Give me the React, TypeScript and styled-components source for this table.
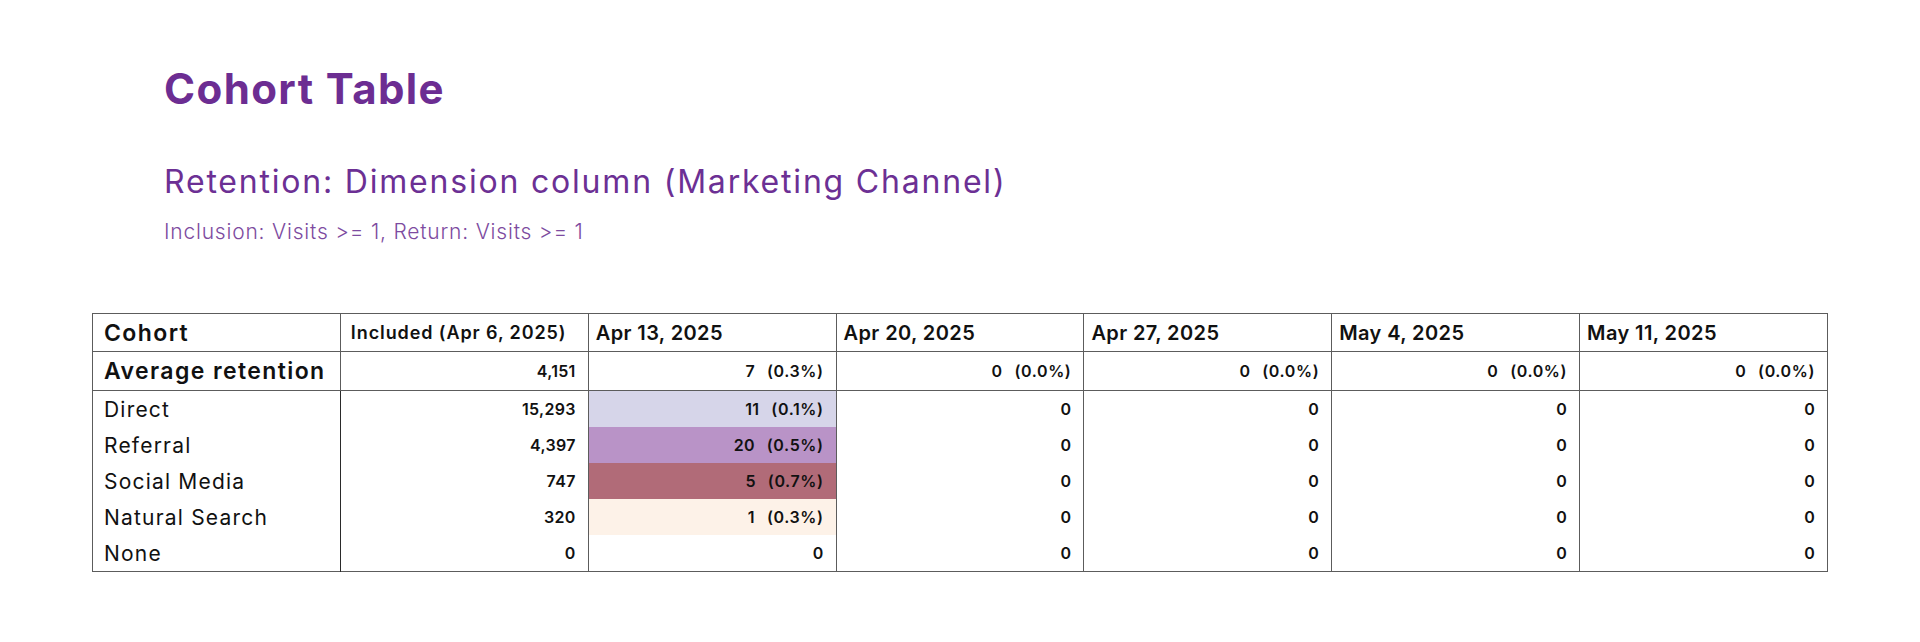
import React from "react";
import styled, { createGlobalStyle } from "styled-components";

const GlobalStyle = createGlobalStyle`
  html, body {
    margin: 0;
    padding: 0;
    background: #ffffff;
  }
  body {
    font-family: Inter, "Open Sans", "Liberation Sans", sans-serif;
    color: #111111;
  }
`;

const Page = styled.div`
  width: 1920px;
  height: 642px;
  box-sizing: border-box;
  padding: 64px 92px 0 92px;
  display: flex;
  flex-direction: column;
`;

const Heading = styled.header`
  display: flex;
  flex-direction: column;
  margin-left: 72px;
`;

const Title = styled.h1`
  margin: 0;
  font-size: 42px;
  line-height: 50px;
  font-weight: 700;
  letter-spacing: 1.4px;
  color: #6c2d92;
`;

const Subtitle = styled.h2`
  margin: 50px 0 0 0;
  font-size: 32px;
  line-height: 36px;
  font-weight: 400;
  letter-spacing: 1.8px;
  color: #6c3094;
`;

const Criteria = styled.p`
  margin: 19px 0 0 0;
  font-size: 21px;
  line-height: 26px;
  font-weight: 300;
  letter-spacing: 0.8px;
  color: #7d4ba0;
`;

const Table = styled.table`
  margin-top: 68px;
  width: 1736px;
  table-layout: fixed;
  border-collapse: collapse;
  border: 1px solid #5c5c5c;
`;

const HeadCell = styled.th<{ $size: number; $ls: number; $pad: number }>`
  height: 37px;
  padding: 0 10px 0 ${(p) => p.$pad}px;
  text-align: left;
  vertical-align: middle;
  font-weight: 600;
  font-size: ${(p) => p.$size}px;
  letter-spacing: ${(p) => p.$ls}px;
  border: 1px solid #5c5c5c;
  white-space: nowrap;
  color: #111;
`;

const AvgLabel = styled.th`
  height: 38px;
  padding: 0 10px 0 11px;
  text-align: left;
  font-weight: 600;
  font-size: 23px;
  letter-spacing: 1.4px;
  border: 1px solid #5c5c5c;
  white-space: nowrap;
  color: #111;
`;

const AvgCell = styled.td`
  height: 38px;
  padding: 0 12px 0 10px;
  text-align: right;
  font-weight: 600;
  font-size: 16px;
  letter-spacing: 0.3px;
  border: 1px solid #5c5c5c;
  white-space: nowrap;
  color: #111;
`;

const RowLabel = styled.th`
  height: 36px;
  padding: 0 10px 0 11px;
  text-align: left;
  font-weight: 400;
  font-size: 21px;
  letter-spacing: 1.2px;
  border-left: 1px solid #5c5c5c;
  border-right: 1px solid #2a2a2a;
  white-space: nowrap;
  color: #111;
`;

const DataCell = styled.td<{ $bg?: string }>`
  height: 36px;
  padding: 0 12px 0 10px;
  text-align: right;
  font-weight: 600;
  font-size: 16px;
  letter-spacing: 0.3px;
  border-left: 1px solid #5c5c5c;
  border-right: 1px solid #5c5c5c;
  background: ${(p) => p.$bg ?? "transparent"};
  white-space: nowrap;
  color: #111;
`;

const Pct = styled.span`
  margin-left: 12px;
  letter-spacing: 0.6px;
`;

const dates = ["Apr 13, 2025", "Apr 20, 2025", "Apr 27, 2025", "May 4, 2025", "May 11, 2025"];

type Cell = { v: string; pct?: string; bg?: string };

const avg: Cell[] = [
  { v: "7", pct: "(0.3%)" },
  { v: "0", pct: "(0.0%)" },
  { v: "0", pct: "(0.0%)" },
  { v: "0", pct: "(0.0%)" },
  { v: "0", pct: "(0.0%)" },
];

const zeros = (): Cell[] => [{ v: "0" }, { v: "0" }, { v: "0" }, { v: "0" }];

const rows: { label: string; included: string; cells: Cell[] }[] = [
  { label: "Direct", included: "15,293", cells: [{ v: "11", pct: "(0.1%)", bg: "#d6d5e9" }, ...zeros()] },
  { label: "Referral", included: "4,397", cells: [{ v: "20", pct: "(0.5%)", bg: "#b993c7" }, ...zeros()] },
  { label: "Social Media", included: "747", cells: [{ v: "5", pct: "(0.7%)", bg: "#b16b78" }, ...zeros()] },
  { label: "Natural Search", included: "320", cells: [{ v: "1", pct: "(0.3%)", bg: "#fdf2e8" }, ...zeros()] },
  { label: "None", included: "0", cells: [{ v: "0" }, ...zeros()] },
];

const Value: React.FC<{ cell: Cell }> = ({ cell }) => (
  <>
    {cell.v}
    {cell.pct && <Pct>{cell.pct}</Pct>}
  </>
);

export default function App() {
  return (
    <>
      <GlobalStyle />
      <Page>
        <Heading>
          <Title>Cohort Table</Title>
          <Subtitle>Retention: Dimension column (Marketing Channel)</Subtitle>
          <Criteria>Inclusion: Visits &gt;= 1, Return: Visits &gt;= 1</Criteria>
        </Heading>
        <Table>
          <thead>
            <tr>
              <HeadCell $size={23} $ls={1.4} $pad={11}>Cohort</HeadCell>
              <HeadCell $size={18} $ls={0.9} $pad={10}>Included (Apr 6, 2025)</HeadCell>
              {dates.map((d) => (
                <HeadCell key={d} $size={20} $ls={0.4} $pad={7}>{d}</HeadCell>
              ))}
            </tr>
            <tr>
              <AvgLabel>Average retention</AvgLabel>
              <AvgCell>4,151</AvgCell>
              {avg.map((c, i) => (
                <AvgCell key={i}>
                  <Value cell={c} />
                </AvgCell>
              ))}
            </tr>
          </thead>
          <tbody>
            {rows.map((r) => (
              <tr key={r.label}>
                <RowLabel>{r.label}</RowLabel>
                <DataCell>{r.included}</DataCell>
                {r.cells.map((c, i) => (
                  <DataCell key={i} $bg={c.bg}>
                    <Value cell={c} />
                  </DataCell>
                ))}
              </tr>
            ))}
          </tbody>
        </Table>
      </Page>
    </>
  );
}
